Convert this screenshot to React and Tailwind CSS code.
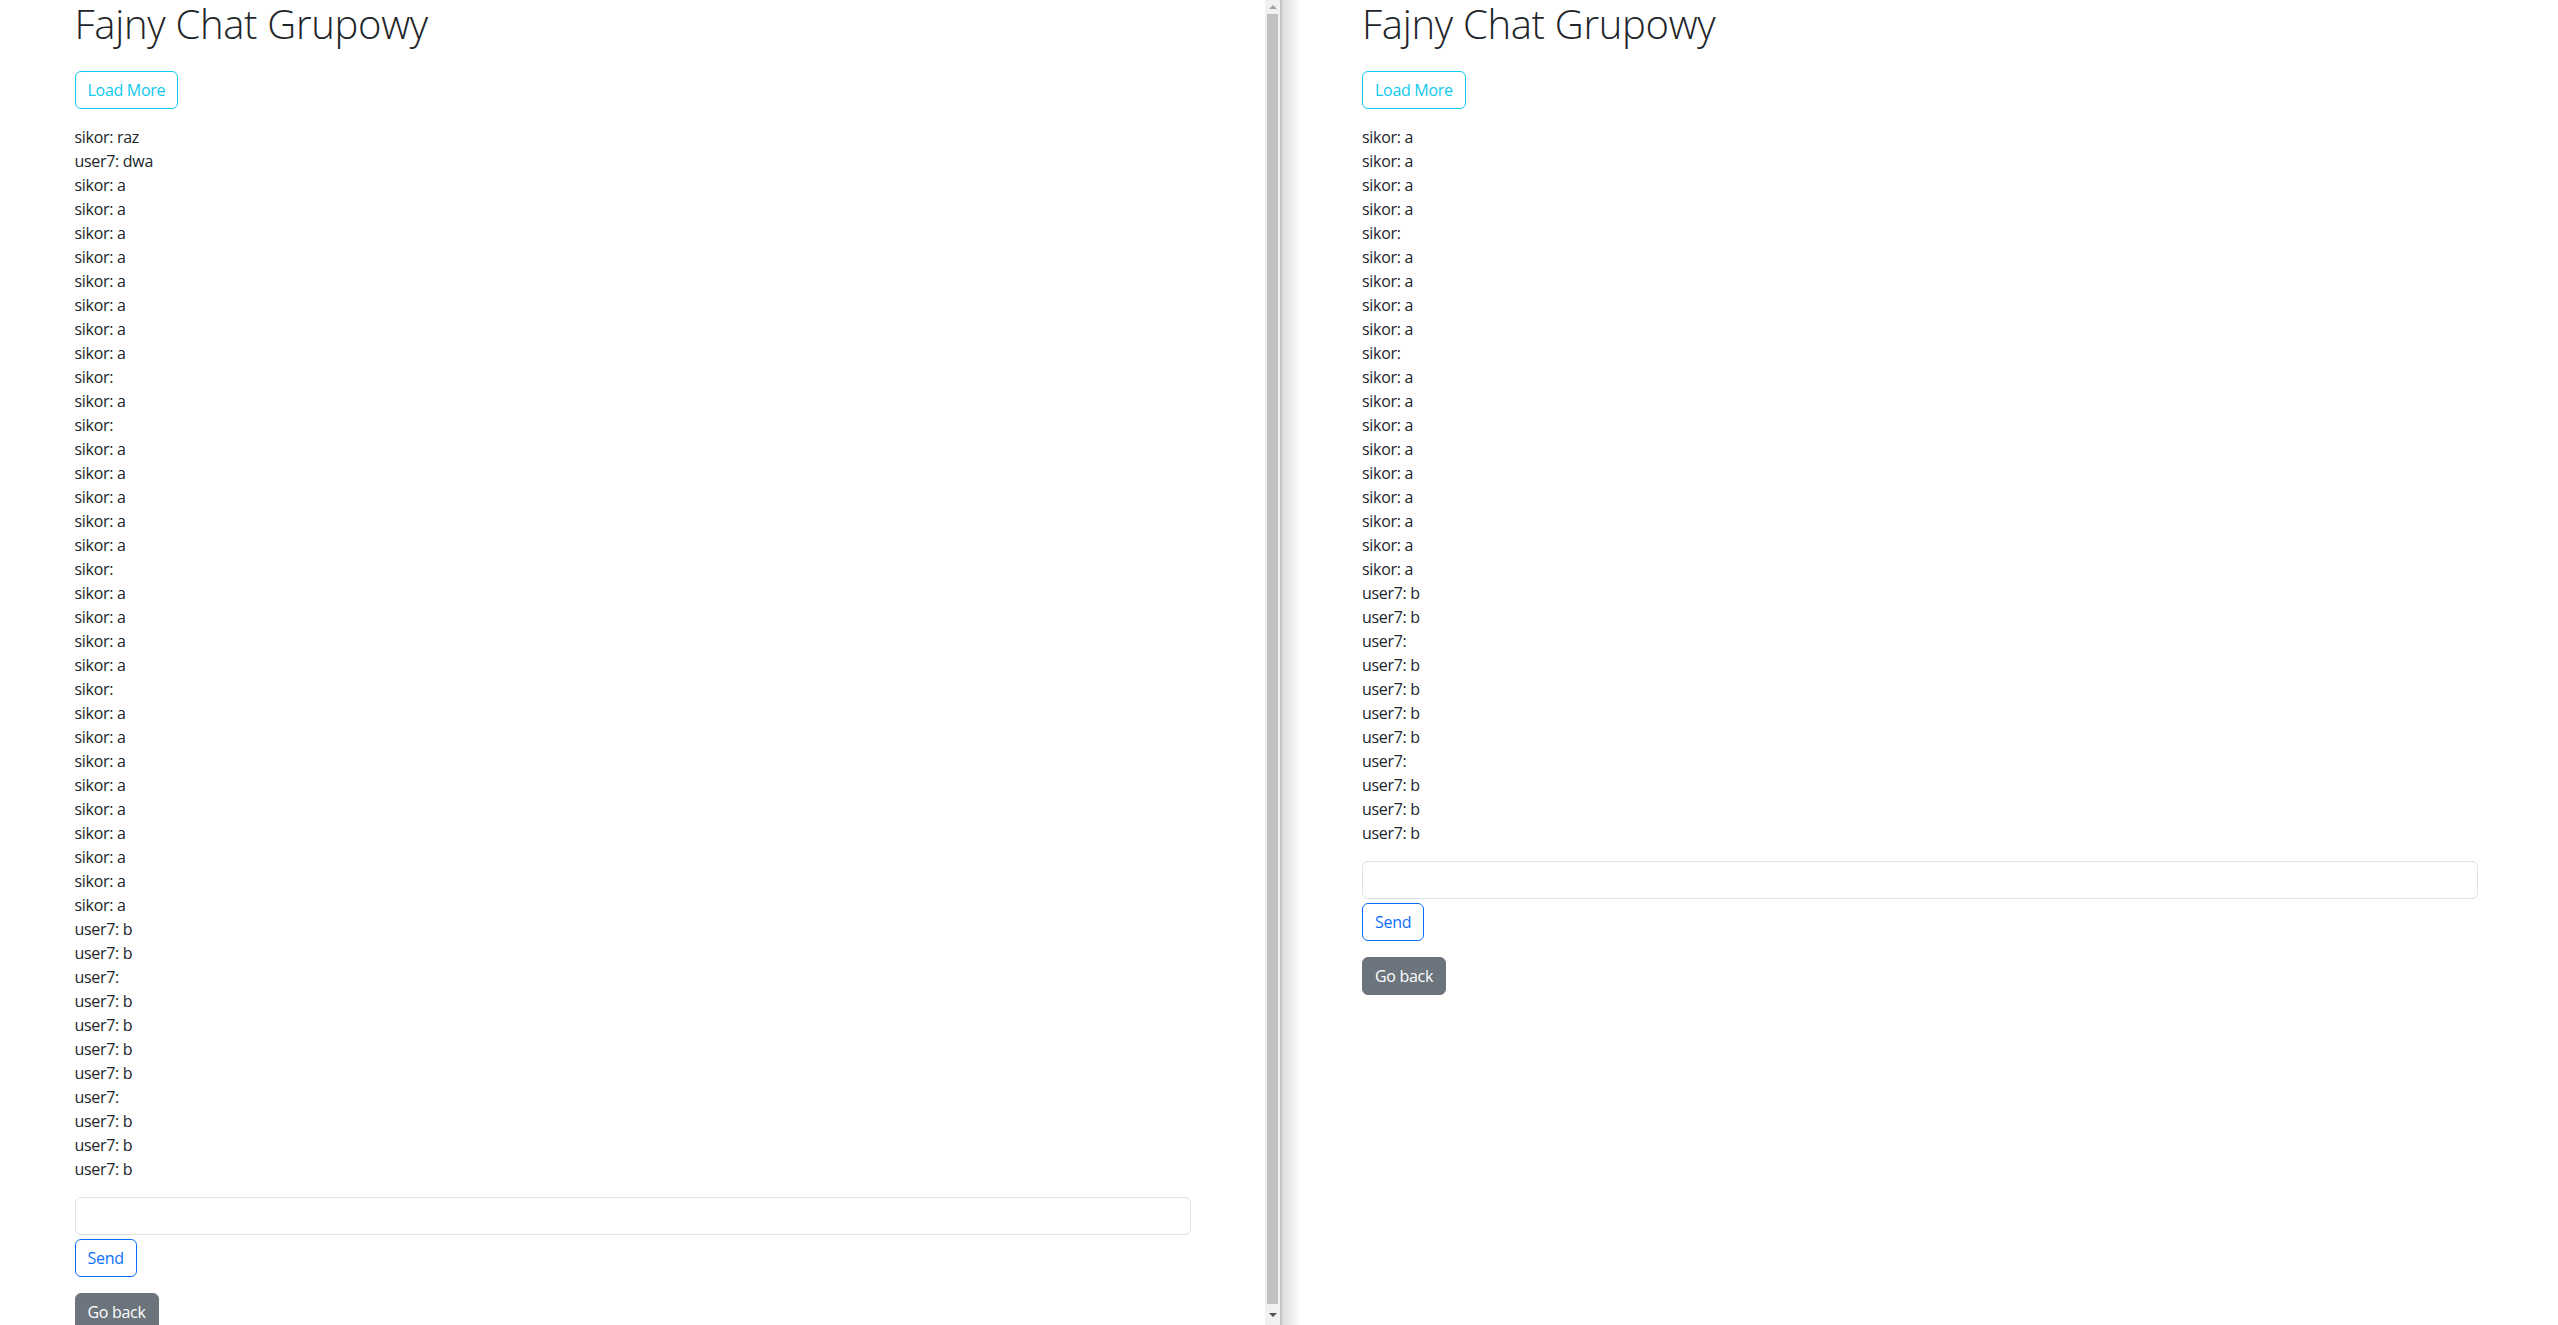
const leftMessages = [
  'sikor: raz', 'user7: dwa',
  'sikor: a', 'sikor: a', 'sikor: a', 'sikor: a', 'sikor: a', 'sikor: a', 'sikor: a', 'sikor: a',
  'sikor:', 'sikor: a', 'sikor:',
  'sikor: a', 'sikor: a', 'sikor: a', 'sikor: a', 'sikor: a',
  'sikor:',
  'sikor: a', 'sikor: a', 'sikor: a', 'sikor: a',
  'sikor:',
  'sikor: a', 'sikor: a', 'sikor: a', 'sikor: a', 'sikor: a', 'sikor: a', 'sikor: a', 'sikor: a', 'sikor: a',
  'user7: b', 'user7: b', 'user7:',
  'user7: b', 'user7: b', 'user7: b', 'user7: b',
  'user7:',
  'user7: b', 'user7: b', 'user7: b',
];

// the second window only shows the last 30
const rightMessages = leftMessages.slice(14);

function ChatPane({ messages }) {
  return (
    <div className="mx-auto w-full max-w-[1140px] px-3 tracking-[-0.3px]">
      <h1 className="mb-2 text-[40px] font-[350] leading-[1.2] tracking-[-0.3px] text-[#212529]">Fajny Chat Grupowy</h1>
      <button className="mt-[15px] h-[38px] rounded-[6px] border border-[#0dcaf0] px-3 text-base leading-6 text-[#0dcaf0]">
        Load More
      </button>
      <div className="mt-4">
        {messages.map((m, i) => (
          <div key={i} className="h-6 text-base leading-6 text-[#212529]">{m}</div>
        ))}
      </div>
      <input type="text" className="mt-4 block h-[38px] w-full rounded-[6px] border border-[#dee2e6] bg-white px-3 outline-none" />
      <button className="mt-1 h-[38px] rounded-[6px] border border-[#0d6efd] px-3 text-base leading-6 text-[#0d6efd]">
        Send
      </button>
      <div>
        <button className="mt-4 h-[38px] rounded-[6px] border border-[#6c757d] bg-[#6c757d] px-3 text-base leading-6 text-white">
          Go back
        </button>
      </div>
    </div>
  );
}

function Scrollbar() {
  return (
    <div className="flex h-full w-[15px] shrink-0 flex-col items-center bg-[#f1f1f1]">
      <div className="flex h-[14px] w-full items-center justify-center">
        <div className="h-0 w-0 border-x-[4px] border-b-[4px] border-x-transparent border-b-[#a3a3a3]" />
      </div>
      <div className="w-[11px] flex-1 bg-[#c1c1c1]" />
      <div className="flex h-[21px] w-full items-center justify-center">
        <div className="h-0 w-0 border-x-[4px] border-t-[4px] border-x-transparent border-t-[#505050]" />
      </div>
    </div>
  );
}

export default function App() {
  return (
    <div className="flex h-[1325px] w-full overflow-hidden bg-white font-['Open_Sans',sans-serif]">
      <div className="flex h-full w-[1280px] shrink-0">
        <div className="h-full w-[1265px] shrink-0 overflow-hidden">
          <ChatPane messages={leftMessages} />
        </div>
        <Scrollbar />
      </div>
      <div className="w-[2px] shrink-0 bg-[#c4c4c4]" />
      <div className="h-full flex-1 bg-[linear-gradient(to_right,#dadada,#ffffff_18px)]">
        <ChatPane messages={rightMessages} />
      </div>
    </div>
  );
}
